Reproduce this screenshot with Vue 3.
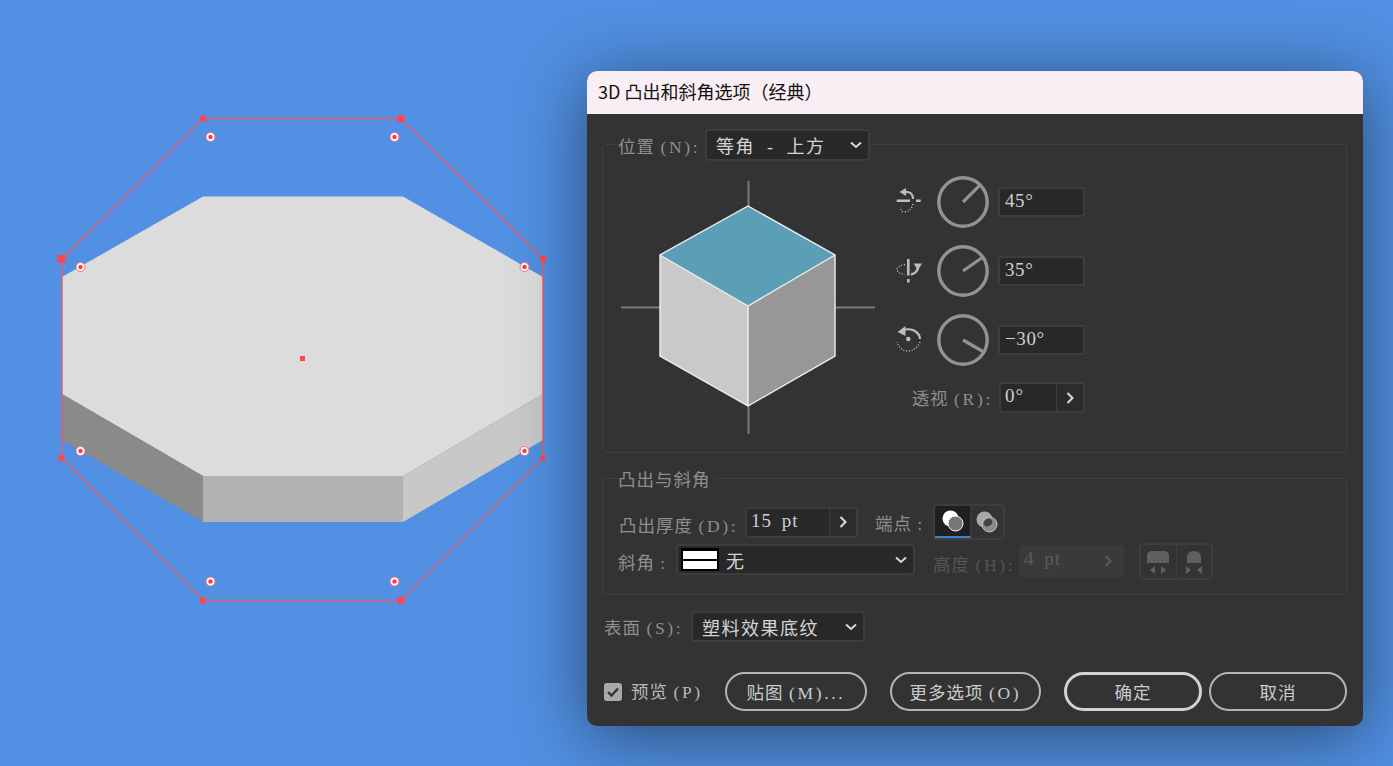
<script setup>
const outline = '203,118.5 401,118.5 543,259 543,458 401,600.5 203,600.5 62,458 62,259'
const anchors = [
  [203, 118.5, 6], [401, 118.5, 7], [543, 259, 6], [543, 458, 5],
  [401, 600.5, 7], [203, 600.5, 6], [61.5, 458, 6], [61.5, 259, 8]
]
const widgets = [
  [210.5, 137], [394.5, 137], [80.5, 267], [524.5, 267],
  [80.5, 451], [524.5, 451], [210.5, 581.5], [394.5, 581.5]
]

const dials = [
  { id: 'x', deg: 45, value: '45°' },
  { id: 'y', deg: 35, value: '35°' },
  { id: 'z', deg: -30, value: '−30°' }
].map((d) => {
  const a = (d.deg * Math.PI) / 180
  return { ...d, x: 26 + 24 * Math.cos(a), y: 26 - 24 * Math.sin(a) }
})
</script>

<template>
  <div class="page">
    <div class="canvas">
      <svg width="587" height="766" viewBox="0 0 587 766">
        <polygon points="203,196.500 403,196.500 543,277 543,394 403,476 203,476 62,394 62,277" fill="#dcdcdc" />
        <polygon points="62,394 203,476 203,522 62,440" fill="#8a8a8a" />
        <polygon points="203,476 403,476 403,522 203,522" fill="#b2b2b2" />
        <polygon points="403,476 543,394 543,440 403,522" fill="#c8c8c8" />
        <polygon :points="outline" fill="none" stroke="#e0606c" stroke-width="1.5" />
        <rect
          v-for="(p, i) in anchors"
          :key="i"
          :x="p[0] - p[2] / 2"
          :y="p[1] - p[2] / 2"
          :width="p[2]"
          :height="p[2]"
          fill="#ff4650"
        />
        <g v-for="(w, i) in widgets" :key="'w' + i">
          <circle :cx="w[0]" :cy="w[1]" r="4.5" fill="#fff" stroke="#f0707a" stroke-width="1" />
          <circle :cx="w[0]" :cy="w[1]" r="2.2" fill="#f2404c" />
        </g>
        <rect x="300" y="356" width="5" height="5" fill="#ff4650" />
      </svg>
    </div>

    <div class="dialog">
      <div class="titlebar">3D 凸出和斜角选项（经典）</div>
      <div class="body">
        <fieldset class="group group-pos">
          <legend class="legend-row">
            <span class="label">位置 <span class="en">(N):</span></span>
            <div class="select select-pos">
              <span>等角 - 上方</span>
              <svg class="chev" width="12" height="8" viewBox="0 0 12 8"><path d="M1 1.5 6 6l5-4.5" /></svg>
            </div>
          </legend>
          <div class="pos-content">
            <svg class="preview" width="260" height="260" viewBox="618 178 260 260">
              <defs>
                <pattern id="dots" x="622" y="181" width="10.5" height="10.5" patternUnits="userSpaceOnUse">
                  <rect width="1" height="1" fill="#484848" />
                </pattern>
              </defs>
              <rect x="620" y="180" width="257" height="256" fill="url(#dots)" />
              <path d="M748.500 181v25M748.500 406v28M621 307.500h39M835 307.500h40" stroke="#7a7a7a" stroke-width="2" fill="none" />
              <polygon points="660,255 748,306 748,406 660,356" fill="#c9c9c9" />
              <polygon points="835,255 748,306 748,406 835,356" fill="#979797" />
              <polygon points="748,206 835,255 748,306 660,255" fill="#5a9fb6" />
              <path
                d="M748 206 835 255V356L748 406 660 356V255ZM660 255 748 306 835 255M748 306V406"
                fill="none"
                stroke="#efefef"
                stroke-width="1.4"
              />
            </svg>
            <div class="controls">
              <div v-for="d in dials" :key="d.id" class="dial-row">
                <svg class="axis" width="26" height="26" viewBox="0 0 26 26" fill="none" stroke="#bdbdbd">
                  <template v-if="d.id === 'x'">
                    <path d="M0.7 11.7H14M20 11.7h4.7" stroke-width="2.400" />
                    <path d="M8 3Q17 2 17 10" stroke-width="2.200" />
                    <path d="M10 -1 3.500 3 10 7Z" fill="#bdbdbd" stroke="none" />
                    <path d="M17 15Q15 23 8 23 5 23 4 18" stroke-width="1.500" stroke-dasharray="1 1.800" />
                  </template>
                  <template v-else-if="d.id === 'y'">
                    <path d="M12.300 1V17.500M12.300 21v3.500" stroke-width="2.600" />
                    <path d="M15 16.500Q22 15 22 8" stroke-width="2.400" />
                    <path d="M17.500 5.500H26L22 12Z" fill="#bdbdbd" stroke="none" />
                    <path d="M9 6.500Q1 8 1 11.500T9 16.500" stroke-width="1.500" stroke-dasharray="1 1.800" />
                  </template>
                  <template v-else>
                    <circle cx="12.300" cy="12" r="2.300" fill="#bdbdbd" stroke="none" />
                    <path d="M7 3.500Q12 1 18 3.500 24 7 24 12" stroke-width="2.200" />
                    <path d="M9.500 -1V9L1.500 5Z" fill="#bdbdbd" stroke="none" />
                    <path d="M24 15Q20 24 12 24 4 24 1 15" stroke-width="1.500" stroke-dasharray="1 1.800" />
                  </template>
                </svg>
                <svg class="dial" width="52" height="52" viewBox="0 0 52 52">
                  <circle cx="26" cy="26" r="24.200" fill="none" stroke="#929292" stroke-width="3.400" />
                  <line x1="26" y1="26" :x2="d.x" :y2="d.y" stroke="#929292" stroke-width="3.200" />
                </svg>
                <div class="field field-angle">{{ d.value }}</div>
              </div>
              <div class="persp-row">
                <span class="label">透视 <span class="en">(R):</span></span>
                <div class="stepper stepper-persp">
                  <div class="step-value">0°</div>
                  <div class="step-btn">
                    <svg width="8" height="12" viewBox="0 0 8 12"><path d="M1.500 1 6.500 6l-5 5" /></svg>
                  </div>
                </div>
              </div>
            </div>
          </div>
        </fieldset>

        <fieldset class="group group-ext">
          <legend class="legend-text">凸出与斜角</legend>
          <div class="ext-row ext-row-a">
            <span class="label label-depth">凸出厚度 <span class="en">(D):</span></span>
            <div class="stepper stepper-depth">
              <div class="step-value">15 pt</div>
              <div class="step-btn">
                <svg width="8" height="12" viewBox="0 0 8 12"><path d="M1.500 1 6.500 6l-5 5" /></svg>
              </div>
            </div>
            <span class="label label-cap">端点 :</span>
            <div class="toggle">
              <div class="toggle-on">
                <svg width="22" height="22" viewBox="0 0 22 22">
                  <circle cx="8.500" cy="8.500" r="8" fill="#fff" />
                  <circle cx="13.500" cy="13.500" r="7.500" fill="#777" stroke="#fff" stroke-width="1" />
                </svg>
              </div>
              <div class="toggle-off">
                <svg width="22" height="22" viewBox="0 0 22 22">
                  <circle cx="8.500" cy="8.500" r="8" fill="#a8a8a8" />
                  <circle cx="13.500" cy="13.500" r="7.500" fill="#8a8a8a" stroke="#c4c4c4" stroke-width="1" />
                  <ellipse cx="12" cy="11.500" rx="4.500" ry="3.500" fill="#444" transform="rotate(-35 12 11.500)" />
                </svg>
              </div>
            </div>
          </div>
          <div class="ext-row ext-row-b">
            <span class="label label-bevel">斜角 :</span>
            <div class="select select-bevel">
              <span class="swatch"><i></i><i></i></span>
              <span>无</span>
              <svg class="chev" width="12" height="8" viewBox="0 0 12 8"><path d="M1 1.500 6 6l5-4.500" /></svg>
            </div>
            <span class="label label-height">高度 <span class="en">(H):</span></span>
            <div class="field-off">
              <span>4 pt</span>
              <svg width="8" height="12" viewBox="0 0 8 12"><path d="M1.500 1 6.500 6l-5 5" /></svg>
            </div>
            <div class="bevel-btns">
              <div class="bevel-btn">
                <svg width="24" height="24" viewBox="0 0 24 24" fill="#5f5f5f">
                  <path d="M1 13V6q0-5 5-5h12q5 0 5 5v7Z" />
                  <path d="M9 16v8l-5-4ZM15 16v8l5-4Z" />
                </svg>
              </div>
              <div class="bevel-btn">
                <svg width="24" height="24" viewBox="0 0 24 24" fill="#5f5f5f">
                  <path d="M5 13V8q0-7 7-7t7 7v5Z" />
                  <path d="M4 16v8l5-4ZM20 16v8l-5-4Z" />
                </svg>
              </div>
            </div>
          </div>
        </fieldset>

        <div class="surface-row">
          <span class="label label-surface">表面 <span class="en">(S):</span></span>
          <div class="select select-surface">
            <span>塑料效果底纹</span>
            <svg class="chev" width="12" height="8" viewBox="0 0 12 8"><path d="M1 1.500 6 6l5-4.500" /></svg>
          </div>
        </div>

        <div class="actions">
          <span class="check">
            <svg width="12" height="10" viewBox="0 0 12 10" fill="none"><path d="M1 5 4.500 8.500 11 1.500" stroke="#333" stroke-width="2.400" /></svg>
          </span>
          <span class="check-label">预览 <span class="en">(P)</span></span>
          <button class="btn btn-map">贴图 <span class="en">(M)...</span></button>
          <button class="btn btn-more">更多选项 <span class="en">(O)</span></button>
          <button class="btn btn-ok">确定</button>
          <button class="btn btn-cancel">取消</button>
        </div>
      </div>
    </div>
  </div>
</template>

<style scoped>
.page {
  display: flex;
  align-items: flex-start;
  width: 1393px;
  height: 766px;
  overflow: hidden;
  background: #5190e2;
}
.canvas {
  width: 587px;
  height: 766px;
  flex: none;
}
.canvas svg {
  display: block;
}

.dialog {
  width: 776px;
  height: 655px;
  margin-top: 71px;
  flex: none;
  border-radius: 10px;
  overflow: hidden;
  background: #333;
  box-shadow: 0 10px 70px rgba(0, 0, 0, 0.5);
}
.titlebar {
  height: 43px;
  padding-left: 11px;
  background: #f9eef4;
  color: #111;
  font: 18px/41px "Noto Sans CJK SC", sans-serif;
}
.body {
  padding: 15px 16px 15px 15px;
  font-family: "Liberation Serif", "Noto Sans CJK SC", serif;
  font-size: 17.5px;
  letter-spacing: 1px;
  color: #8e8e8e;
}
.en {
  letter-spacing: 2.7px;
}

.group {
  margin: 0;
  padding: 0 0 0 15px;
  border: 1px solid #3f3f3f;
  border-radius: 4px;
  min-width: 0;
}
.legend-row {
  display: flex;
  align-items: flex-start;
  padding: 0;
  height: 31px;
}
.legend-row .label {
  width: 87px;
  margin-top: 4px;
}
.legend-text {
  padding: 0 4px 0 0;
  height: 18px;
  line-height: 22px;
}
.label {
  white-space: nowrap;
}

.select {
  display: flex;
  align-items: center;
  box-sizing: border-box;
  height: 31px;
  border: 2px solid #3d3d3d;
  border-radius: 4px;
  background: repeating-conic-gradient(#2b2b2b 0 25%, #262626 0 50%) 0 0 / 2px 2px;
  color: #d4d4d4;
  padding-left: 9px;
  font-size: 18px;
  letter-spacing: 1.5px;
  word-spacing: 6px;
}
.chev {
  margin-left: auto;
  margin-right: 6px;
  fill: none;
  stroke: #d8d8d8;
  stroke-width: 2;
}
.select-pos {
  width: 165px;
  height: 32px;
}
.select-surface {
  width: 174px;
}
.select-bevel {
  width: 239px;
  padding-left: 3px;
  gap: 7px;
  align-self: flex-start;
  margin-top: 1px;
}

.pos-content {
  display: flex;
  padding: 18px 0 14px;
}
.preview {
  display: block;
  flex: none;
}
.controls {
  margin-left: 18px;
  margin-top: -2px;
}
.dial-row {
  display: flex;
  align-items: center;
  height: 52px;
  margin-bottom: 17px;
}
.axis {
  flex: none;
  overflow: visible;
}
.dial {
  flex: none;
  margin-left: 15px;
}
.field {
  box-sizing: border-box;
  border: 2px solid #3d3d3d;
  border-radius: 3px;
  background: repeating-conic-gradient(#2b2b2b 0 25%, #262626 0 50%) 0 0 / 2px 2px;
  color: #ccd0d6;
}
.field-angle {
  width: 87px;
  height: 30px;
  margin-left: 9px;
  padding-left: 5px;
  font-size: 19px;
  line-height: 24px;
  letter-spacing: 0.6px;
}
.persp-row {
  display: flex;
  align-items: center;
  justify-content: flex-end;
  margin-top: -1px;
  width: 189px;
  gap: 6px;
}

.stepper {
  display: flex;
  box-sizing: border-box;
  border: 2px solid #3d3d3d;
  border-radius: 3px;
  flex: none;
  color: #ccd0d6;
}
.stepper-persp {
  width: 86px;
  height: 31px;
}
.stepper-depth {
  width: 113px;
  height: 31px;
}
.step-value {
  flex: 1;
  padding-left: 4px;
  font-size: 19px;
  line-height: 23px;
  word-spacing: 4px;
  letter-spacing: 1px;
  background: repeating-conic-gradient(#2b2b2b 0 25%, #262626 0 50%) 0 0 / 2px 2px;
}
.step-btn {
  width: 26px;
  display: flex;
  align-items: center;
  justify-content: center;
  border-left: 1px solid #3d3d3d;
  background: #2c2c2c;
}
.step-btn svg,
.field-off svg {
  fill: none;
  stroke: #dcdcdc;
  stroke-width: 2;
}

.ext-row {
  display: flex;
  align-items: center;
}
.ext-row-a {
  height: 36px;
  margin-top: 17px;
}
.ext-row-b {
  height: 37px;
  margin-top: 3px;
  margin-bottom: 14px;
}
.label-depth {
  width: 126px;
  flex: none;
  margin-left: 1px;
  margin-top: 4px;
}
.label-cap {
  margin-left: 17px;
  width: 58px;
  flex: none;
}
.toggle {
  display: flex;
  box-sizing: border-box;
  width: 72px;
  height: 36px;
  border: 2px solid #3d3d3d;
  border-radius: 4px;
}
.toggle-on {
  width: 35px;
  background: #1f1f1f;
  border-bottom: 2px solid #3a86d0;
  display: flex;
  align-items: center;
  justify-content: center;
  border-right: 1px solid #3d3d3d;
}
.toggle-off {
  flex: 1;
  display: flex;
  align-items: center;
  justify-content: center;
}
.label-bevel {
  width: 58px;
  flex: none;
}
.label-height {
  width: 86px;
  flex: none;
  margin-left: 18px;
  color: #555;
  margin-top: 3px;
}
.field-off {
  display: flex;
  align-items: center;
  justify-content: space-between;
  box-sizing: border-box;
  width: 105px;
  height: 32px;
  align-self: flex-start;
  margin-top: 2px;
  padding: 0 12px 4px 5px;
  border-radius: 3px;
  background: #3a3a3a;
  color: #5c5c5c;
  font-size: 19px;
  word-spacing: 4px;
  letter-spacing: 1px;
}
.field-off svg {
  stroke: #585858;
  margin-top: 4px;
}
.bevel-btns {
  display: flex;
  box-sizing: border-box;
  margin-left: 15px;
  width: 74px;
  height: 37px;
  border: 2px solid #3d3d3d;
  border-radius: 4px;
}
.bevel-btn {
  flex: 1;
  display: flex;
  align-items: center;
  justify-content: center;
}
.bevel-btn + .bevel-btn {
  border-left: 1px solid #3d3d3d;
}
.swatch {
  display: flex;
  flex-direction: column;
  justify-content: center;
  gap: 2px;
  box-sizing: border-box;
  width: 38px;
  height: 23px;
  padding: 2px;
  background: #000;
}
.swatch i {
  height: 8px;
  background: #fff;
}

.group-ext {
  margin-top: 16px;
}

.surface-row {
  display: flex;
  align-items: center;
  gap: 6px;
  margin-top: 16px;
  padding-left: 2px;
  height: 31px;
}
.label-surface {
  width: 81px;
  flex: none;
}

.actions {
  display: flex;
  align-items: center;
  margin-top: 30px;
  height: 39px;
  padding-left: 2px;
}
.check {
  display: flex;
  align-items: center;
  justify-content: center;
  width: 18px;
  height: 18px;
  border-radius: 3px;
  background: #a8a8a8;
}
.check-label {
  width: 94px;
  margin-left: 9px;
  color: #b8b8b8;
  flex: none;
  margin-top: -3px;
}
.btn {
  box-sizing: border-box;
  height: 39px;
  padding: 0;
  border: 2px solid #b4b4b4;
  border-radius: 20px;
  background: transparent;
  color: #c8ccd0;
  font: inherit;
  letter-spacing: inherit;
  flex: none;
}
.btn-map {
  width: 142px;
}
.btn-more {
  width: 151px;
  margin-left: 23px;
}
.btn-ok {
  width: 138px;
  margin-left: 23px;
  border: 3px solid #d2d2d2;
}
.btn-cancel {
  width: 138px;
  margin-left: 7px;
}
</style>
